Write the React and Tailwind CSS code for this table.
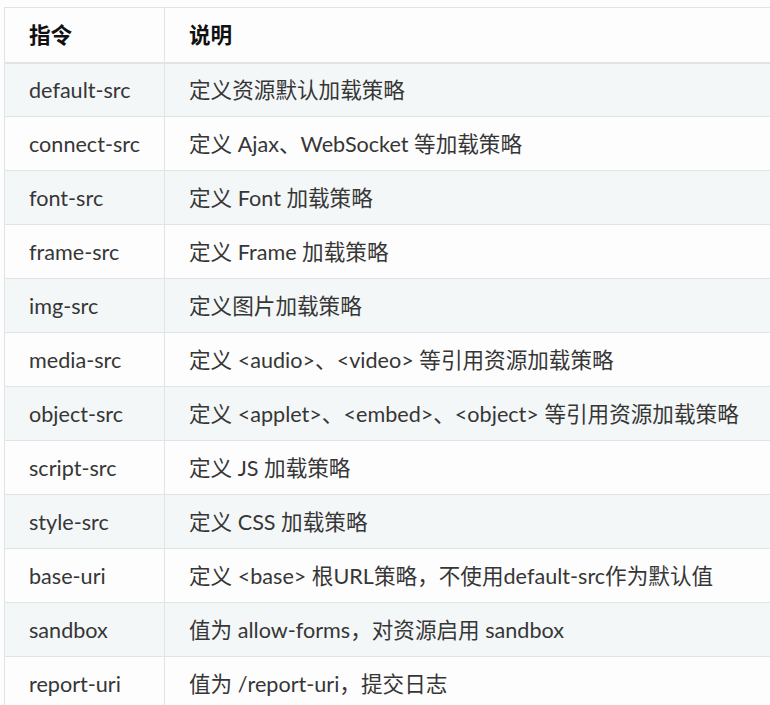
import React from "react";

const rows = [
    ["default-src", "定义资源默认加载策略"],
    ["connect-src", "定义 Ajax、WebSocket 等加载策略"],
    ["font-src", "定义 Font 加载策略"],
    ["frame-src", "定义 Frame 加载策略"],
    ["img-src", "定义图片加载策略"],
    ["media-src", "定义 <audio>、<video> 等引用资源加载策略"],
    ["object-src", "定义 <applet>、<embed>、<object> 等引用资源加载策略"],
    ["script-src", "定义 JS 加载策略"],
    ["style-src", "定义 CSS 加载策略"],
    ["base-uri", "定义 <base> 根URL策略，不使用default-src作为默认值"],
    ["sandbox", "值为 allow-forms，对资源启用 sandbox"],
    ["report-uri", "值为 /report-uri，提交日志"],
];

function App() {
    return (
        <div
            className="w-[770px] h-[705px] overflow-hidden bg-[#fdfdfd] pt-[7px] pl-[4px] text-[#363636]"
            style={{ fontFamily: 'Lato, "Noto Sans CJK SC", sans-serif' }}
        >
            <table className="border-collapse w-[820px] text-[21.6px] leading-none">
                <thead>
                    <tr>
                        <th className="w-[160px] h-[55px] border border-[#e1e4e5] border-b-2 text-left font-bold text-[#111] pl-[24px] pt-[2px]">
                            指令
                        </th>
                        <th className="h-[55px] border border-[#e1e4e5] border-b-2 text-left font-bold text-[#111] pl-[24px] pt-[2px]">
                            说明
                        </th>
                    </tr>
                </thead>
                <tbody>
                    {rows.map((row, i) => (
                        <tr key={row[0]} className={i % 2 === 0 ? "bg-[#f4f7f8]" : "bg-[#fdfdfd]"}>
                            <td className="h-[54px] border border-[#e1e4e5] pl-[24px] pt-[2px] whitespace-nowrap">
                                {row[0]}
                            </td>
                            <td className="h-[54px] border border-[#e1e4e5] pl-[24px] pt-[2px] whitespace-nowrap">
                                {row[1]}
                            </td>
                        </tr>
                    ))}
                </tbody>
            </table>
        </div>
    );
}

export default App;
